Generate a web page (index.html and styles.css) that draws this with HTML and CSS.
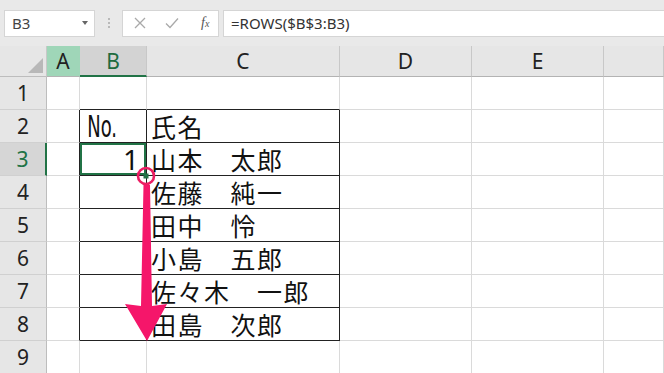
FILE: index.html
```html
<!DOCTYPE html>
<html lang="ja">
<head>
<meta charset="utf-8">
<link rel="stylesheet" href="styles.css">
</head>
<body>
<div class="app">
  <div class="fbar">
    <div class="namebox"><span>B3</span><span class="caret"></span></div>
    <div class="grip"><i></i><i></i><i></i></div>
    <div class="btns">
      <svg class="ico" width="12" height="12" viewBox="0 0 12 12"><path d="M1 1L11 11M11 1L1 11" stroke="#a9a9a9" stroke-width="1.3" fill="none"/></svg>
      <svg class="ico" width="14" height="12" viewBox="0 0 14 12"><path d="M1 6.5L5 10.5L13 1.5" stroke="#a9a9a9" stroke-width="1.3" fill="none"/></svg>
      <span class="fx">f<small>x</small></span>
    </div>
    <div class="formula">=ROWS($B$3:B3)</div>
  </div>
  <div class="sheet">
    <div class="corner"></div><div class="ch ch-a">A</div><div class="ch ch-b">B</div><div class="ch">C</div><div class="ch">D</div><div class="ch">E</div><div class="ch"></div>

    <div class="rh">1</div><div class="c"></div><div class="c tb-top"></div><div class="c tb-top"></div><div class="c"></div><div class="c"></div><div class="c"></div>

    <div class="rh">2</div><div class="c tb-pre"></div><div class="c t"><span class="no">No.</span></div><div class="c t name">氏名</div><div class="c"></div><div class="c"></div><div class="c"></div>

    <div class="rh rh-sel">3</div><div class="c tb-pre"></div><div class="c t num sel">1</div><div class="c t name">山本　太郎</div><div class="c"></div><div class="c"></div><div class="c"></div>

    <div class="rh">4</div><div class="c tb-pre"></div><div class="c t"></div><div class="c t name">佐藤　純一</div><div class="c"></div><div class="c"></div><div class="c"></div>

    <div class="rh">5</div><div class="c tb-pre"></div><div class="c t"></div><div class="c t name">田中　怜</div><div class="c"></div><div class="c"></div><div class="c"></div>

    <div class="rh">6</div><div class="c tb-pre"></div><div class="c t"></div><div class="c t name">小島　五郎</div><div class="c"></div><div class="c"></div><div class="c"></div>

    <div class="rh">7</div><div class="c tb-pre"></div><div class="c t"></div><div class="c t name">佐々木　一郎</div><div class="c"></div><div class="c"></div><div class="c"></div>

    <div class="rh">8</div><div class="c tb-pre"></div><div class="c t"></div><div class="c t name">田島　次郎</div><div class="c"></div><div class="c"></div><div class="c"></div>

    <div class="rh">9</div><div class="c"></div><div class="c"></div><div class="c"></div><div class="c"></div><div class="c"></div><div class="c"></div>

    <svg class="overlay" width="664" height="330" viewBox="0 46 664 330">
      <path d="M143.5 185 L150 185 L152 306 L167 304 L147 341 L125 304 L141 306 Z" fill="#f5166a"/>
      <circle cx="146" cy="176" r="8" fill="none" stroke="#ec1d63" stroke-width="2.6"/>
      <rect x="143.5" y="173.5" width="5" height="5" fill="#217346"/>
    </svg>
  </div>
</div>
</body>
</html>
```

FILE: styles.css
```css
* { box-sizing: border-box; }
html, body { margin: 0; padding: 0; }
body {
  width: 664px;
  height: 373px;
  overflow: hidden;
  background: #fff;
  font-family: "Noto Sans", "Liberation Sans", sans-serif;
}
.app { width: 664px; height: 373px; overflow: hidden; }

.fbar {
  height: 46px;
  background: #e9e9e9;
  display: flex;
  align-items: center;
  padding-left: 4px;
}
.namebox {
  width: 91px;
  height: 27px;
  background: #fff;
  border: 1px solid #d5d5d5;
  display: flex;
  align-items: center;
  justify-content: space-between;
  padding: 0 6px 0 7px;
  font-size: 15px;
  color: #444;
}
.caret {
  width: 0; height: 0;
  border-left: 3.5px solid transparent;
  border-right: 3.5px solid transparent;
  border-top: 4px solid #666;
}
.grip {
  width: 27px;
  display: flex;
  flex-direction: column;
  align-items: center;
  gap: 2px;
}
.grip i { width: 2px; height: 2px; background: #b9b9b9; display: block; }
.btns {
  width: 97px;
  height: 27px;
  background: #fff;
  border: 1px solid #d5d5d5;
  display: flex;
  align-items: center;
  padding-left: 11px;
  gap: 19px;
}
.fx {
  font-family: "Liberation Serif", serif;
  font-style: italic;
  font-size: 14px;
  color: #555;
  margin-left: 3px;
}
.fx small { font-size: 10px; }
.formula {
  margin-left: 4px;
  flex: 1;
  height: 27px;
  background: #fff;
  border: 1px solid #d5d5d5;
  border-right: none;
  display: flex;
  align-items: center;
  padding-left: 7px;
  font-size: 15px;
  color: #333;
}

.sheet {
  position: relative;
  display: grid;
  grid-template-columns: 47px 33px 67px 193px 132px 132px 60px;
  grid-template-rows: 31px repeat(9, 33px);
}
.corner {
  background: #e6e6e6;
  border-right: 1px solid #c8c8c8;
  border-bottom: 1px solid #bdbdbd;
  position: relative;
}
.corner::after {
  content: "";
  position: absolute;
  right: 3px; bottom: 3px;
  width: 0; height: 0;
  border-left: 15px solid transparent;
  border-bottom: 15px solid #b8b8b8;
}
.ch {
  background: #e6e6e6;
  border-right: 1px solid #c8c8c8;
  border-bottom: 1px solid #b3b3b3;
  display: flex;
  align-items: center;
  justify-content: center;
  font-size: 21px;
  color: #222;
}
.ch-a { background: #9fd6b8; border-right-color: #9fd6b8; }
.ch-b { background: #d3d3d3; color: #1e6b3f; border-bottom: 2px solid #217346; }
.rh {
  background: #e6e6e6;
  border-right: 1px solid #bdbdbd;
  border-bottom: 1px solid #d0d0d0;
  display: flex;
  align-items: center;
  justify-content: center;
  font-size: 21px;
  color: #222;
}
.rh-sel { background: #d6d6d6; color: #217346; border-right: 2px solid #217346; }
.c {
  border-right: 1px solid #dadada;
  border-bottom: 1px solid #dadada;
  display: flex;
  align-items: center;
  font-family: "Noto Sans CJK JP", sans-serif;
  font-size: 25px;
  color: #111;
  white-space: nowrap;
}
.tb-top { border-bottom-color: #222; }
.tb-pre { border-right-color: #222; }
.t { border-right-color: #222; border-bottom-color: #222; }
.name { padding-left: 4px; letter-spacing: 1.5px; }
.num { justify-content: flex-end; padding-right: 7px; font-family: "Noto Sans", sans-serif; font-size: 28px; }
.sel { box-shadow: inset 0 0 0 2px #217346; }
.no {
  display: inline-block;
  font-family: "DejaVu Sans", sans-serif;
  font-size: 30px;
  transform: scaleX(0.6);
  transform-origin: left center;
  padding-left: 12px;
}
.overlay {
  position: absolute;
  left: 0;
  top: 0;
  pointer-events: none;
}
```
